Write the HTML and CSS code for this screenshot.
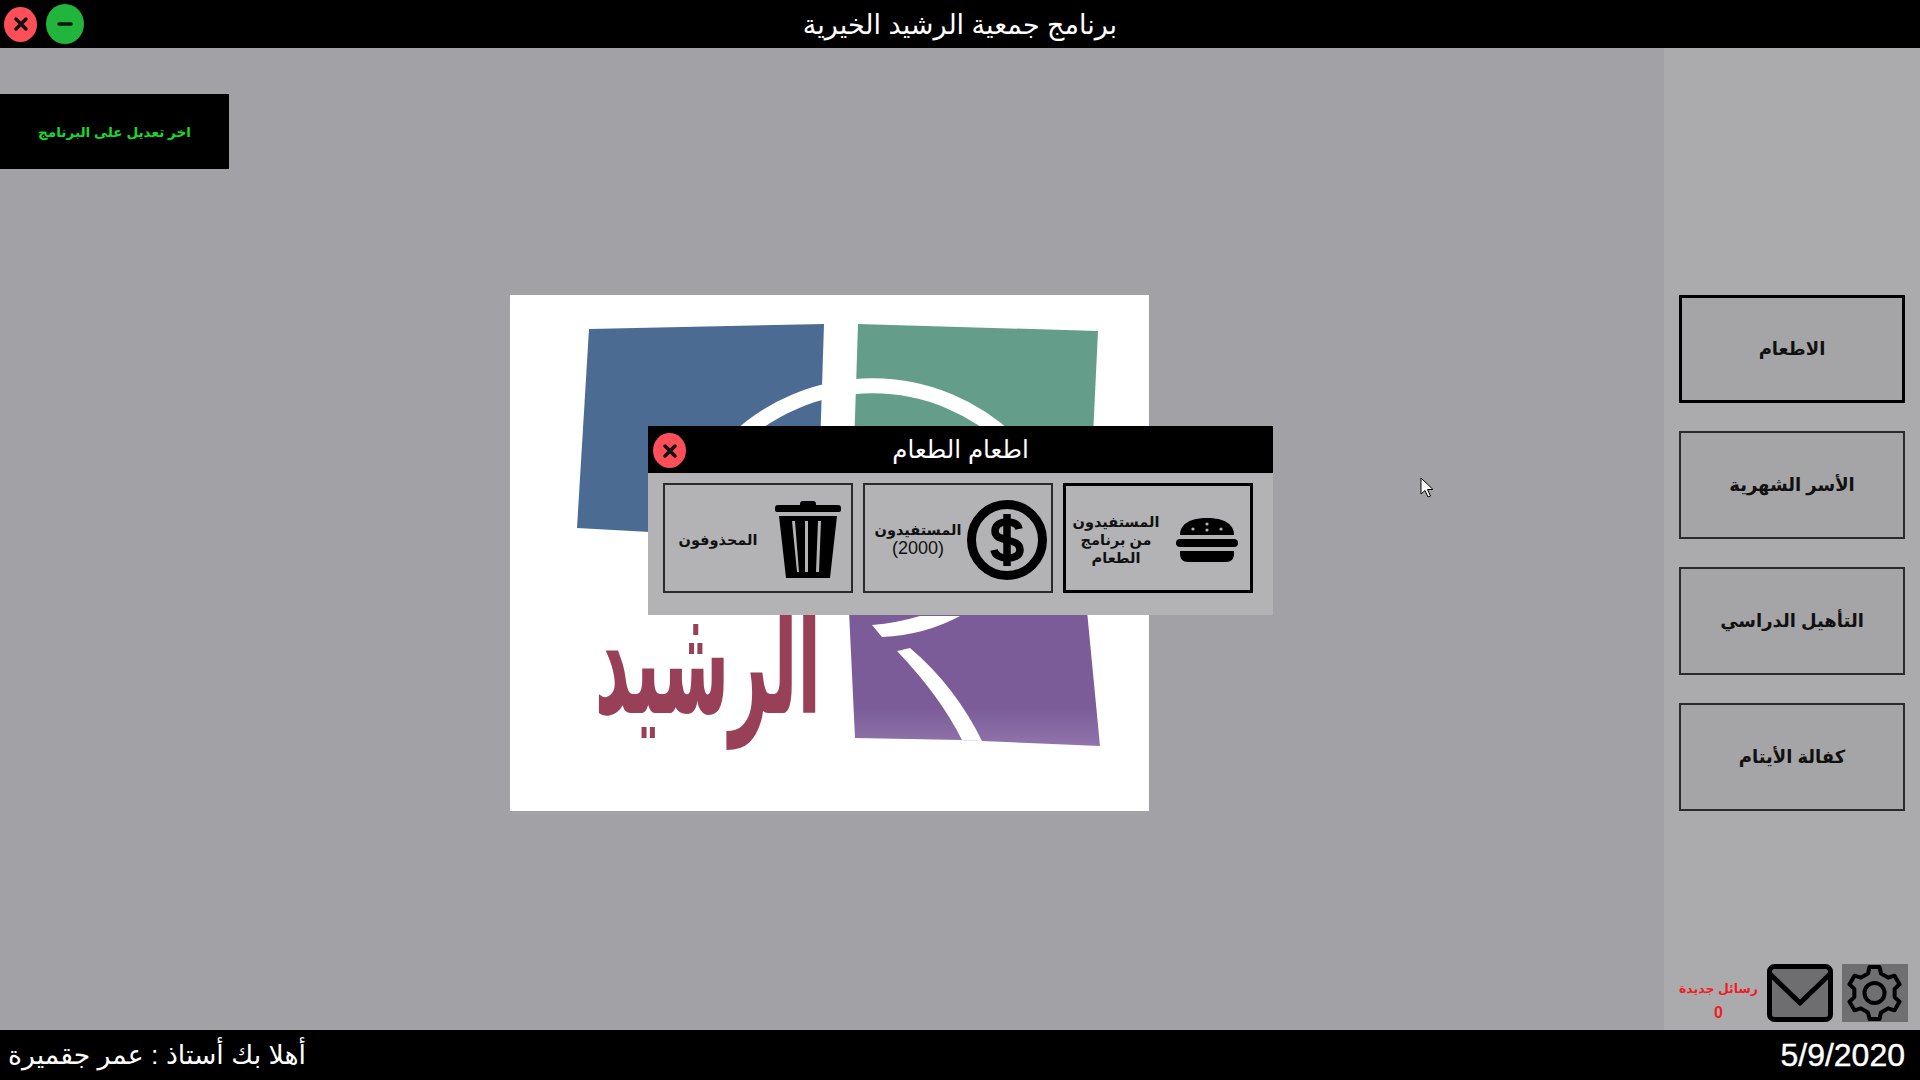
FILE: index.html
```
<!DOCTYPE html>
<html lang="ar">
<head>
    <meta charset="UTF-8">
    <link rel="stylesheet" href="styles.css">
    <title>برنامج جمعية الرشيد الخيرية</title>
</head>
<body>
<div class="app">
    <header class="top_bar">
        <div class="win_btns">
            <button class="round_btn btn_close">
                <svg viewBox="0 0 20 20" class="round_icon"><path d="M5 5L15 15M15 5L5 15"/></svg>
            </button>
            <button class="round_btn btn_min">
                <svg viewBox="0 0 20 20" class="round_icon"><path d="M4 10H16"/></svg>
            </button>
        </div>
        <h1 class="app_title">برنامج جمعية الرشيد الخيرية</h1>
    </header>

    <div class="main">
        <section class="content">
            <div class="last_edit">اخر تعديل على البرنامج</div>

            <svg class="logo" viewBox="510 294 639 516">
                <defs>
                    <linearGradient id="purple_fade" x1="0" y1="0" x2="0" y2="1">
                        <stop offset="0.72" stop-color="#7b5c98"/>
                        <stop offset="1" stop-color="#9174ab"/>
                    </linearGradient>
                </defs>
                <rect x="510" y="294" width="639" height="516" fill="#fff"/>
                <path d="M589 328L824 323L817 540L577 527Z" fill="#4b6b93"/>
                <path d="M858 323L1098 330L1088 540L851 540Z" fill="#659d8b"/>
                <path d="M849 610L1087 610L1100 745L982 740L962 739L855 737Z" fill="url(#purple_fade)"/>
                <path d="M735 440A199 199 0 0 1 1010 440" fill="none" stroke="#fff" stroke-width="15"/>
                <path d="M872 624L882 636Q925 634 960 615H920Q897 622 872 624Z" fill="#fff"/>
                <path d="M897 650L910 647Q955 685 982 740L962 739Q940 695 897 650Z" fill="#fff"/>
                <text class="logo_text" x="0" y="0" transform="translate(821 712) scale(.95 2.1)" direction="rtl" text-anchor="start">الرشيد</text>
            </svg>

            <div class="modal">
                <div class="modal_head">
                    <button class="round_btn modal_close">
                        <svg viewBox="0 0 20 20" class="round_icon"><path d="M5 5L15 15M15 5L5 15"/></svg>
                    </button>
                    <h2 class="modal_title">اطعام الطعام</h2>
                </div>
                <div class="modal_cards">
                    <a class="card card_on">
                        <svg class="card_icon burger" viewBox="0 0 62 44">
                            <path d="M4 17C4 6 14 0 31 0S58 6 58 17Z"/>
                            <rect x="0" y="21" width="62" height="8" rx="4"/>
                            <path d="M4 33H58V36C58 41 55 44 50 44H12C7 44 4 41 4 36Z"/>
                            <g fill="#b3b3b5"><circle cx="17" cy="11" r="1.6"/><circle cx="31" cy="6" r="1.6"/><circle cx="31" cy="12" r="1.6"/><circle cx="45" cy="11" r="1.6"/></g>
                        </svg>
                        <span class="card_text">المستفيدون<br>من برنامج<br>الطعام</span>
                    </a>
                    <a class="card">
                        <svg class="card_icon dollar" viewBox="0 0 80 80">
                            <circle cx="40" cy="40" r="35.5" fill="none" stroke="#000" stroke-width="9"/>
                            <path d="M52 29C51 24 46 22 40 22C33 22 28 25 28 31C28 37 33 38 40 40C47 42 53 43 53 50C53 56 47 58 40 58C33 58 28 55 27 50" fill="none" stroke="#000" stroke-width="7.5"/>
                            <path d="M40 14V66" stroke="#000" stroke-width="7.5"/>
                        </svg>
                        <span class="card_text">المستفيدون<br><span class="card_num">(2000)</span></span>
                    </a>
                    <a class="card card_del">
                        <svg class="card_icon trash" viewBox="0 0 66 77">
                            <path d="M25 3Q25 0 28 0H38Q41 0 41 3V4H63Q66 4 66 7V9Q66 11 63 11H3Q0 11 0 9V7Q0 4 3 4H25Z"/>
                            <path d="M4 15H62L55 77H11ZM20 20H17L22 71H24ZM33 20H30V71H33ZM46 20H43L41 71H44Z" fill-rule="evenodd"/>
                        </svg>
                        <span class="card_text">المحذوفون</span>
                    </a>
                </div>
            </div>

            <svg class="cursor" viewBox="0 0 14 22">
                <path d="M1 1V17L5 13.500L8 20L10.500 19L7.500 12.500H13Z" fill="#fff" stroke="#000" stroke-width="1"/>
            </svg>
        </section>

        <aside class="side">
            <div class="side_menu">
                <a class="side_btn side_btn_on">الاطعام</a>
                <a class="side_btn">الأسر الشهرية</a>
                <a class="side_btn">التأهيل الدراسي</a>
                <a class="side_btn">كفالة الأيتام</a>
            </div>
            <div class="side_tools">
                <div class="msg_count">رسائل جديدة<br><span class="msg_num">0</span></div>
                <svg class="tool_icon" viewBox="0 0 66 58">
                    <rect x="2.500" y="2.500" width="61" height="53" rx="5" fill="#6e6e70" stroke="#000" stroke-width="5"/>
                    <path d="M4 11L33 39L62 11" fill="none" stroke="#000" stroke-width="5" stroke-linecap="round" stroke-linejoin="round"/>
                </svg>
                <svg class="tool_icon" viewBox="0 0 66 58">
                    <rect width="66" height="58" fill="#6f6f71"/>
                    <path d="M26 9.500L27.500 3H37.500L39 9.500L46.140 13.620L52.520 11.670L57.520 20.330L52.640 24.880V33.120L57.520 37.670L52.520 46.330L46.140 44.380L39 48.500L37.500 55H27.500L26 48.500L18.860 44.380L12.480 46.330L7.480 37.670L12.360 33.120V24.880L7.480 20.330L12.480 11.670L18.860 13.620Z" fill="none" stroke="#000" stroke-width="4" stroke-linejoin="round"/>
                    <circle cx="32.500" cy="29" r="10" fill="none" stroke="#000" stroke-width="4"/>
                </svg>
            </div>
        </aside>
    </div>

    <footer class="bottom_bar">
        <span class="welcome">أهلا بك أستاذ : عمر جقميرة</span>
        <span class="date">5/9/2020</span>
    </footer>
</div>
</body>
</html>
```
FILE: styles.css
```
* {
    padding: 0;
    margin: 0;
    box-sizing: border-box;
}

body {
    font-family: "Liberation Sans", "DejaVu Sans", sans-serif;
    background: #a2a1a5;
}

.app {
    width: 1920px;
    height: 1080px;
    display: flex;
    flex-direction: column;
    overflow: hidden;
}

.top_bar {
    position: relative;
    height: 48px;
    padding-top: 2px;
    background: #000;
    display: flex;
    align-items: center;
    justify-content: center;
}

.win_btns {
    position: absolute;
    left: 4px;
    top: 4px;
    display: flex;
    align-items: center;
    gap: 9px;
}

.round_btn {
    border: 0;
    border-radius: 50%;
    display: flex;
    align-items: center;
    justify-content: center;
}

.btn_close {
    width: 33px;
    height: 35px;
    background: #fc4f58;
}

.btn_min {
    width: 38px;
    height: 40px;
    background: #22b53c;
}

.round_icon {
    width: 20px;
    height: 20px;
    fill: none;
    stroke: #111;
    stroke-width: 3.500;
    stroke-linecap: round;
}

.app_title {
    color: #fff;
    font-size: 27px;
    font-weight: normal;
}

.main {
    flex: 1;
    display: flex;
    min-height: 0;
}

.content {
    position: relative;
    flex: 1;
    padding-top: 46px;
    background: #a2a1a5;
}

.last_edit {
    width: 229px;
    height: 75px;
    background: #000;
    color: #18d92b;
    font-size: 13.600px;
    font-weight: bold;
    display: flex;
    align-items: center;
    justify-content: center;
}

.logo {
    display: block;
    width: 639px;
    height: 516px;
    margin: 126px 0 0 510px;
}

.logo_text {
    font-family: "DejaVu Sans", sans-serif;
    font-size: 72px;
    font-weight: bold;
    fill: #994059;
}

.modal {
    position: absolute;
    left: 648px;
    top: 378px;
    width: 625px;
    height: 189px;
    background: #b3b3b5;
}

.modal_head {
    position: relative;
    height: 47px;
    background: #000;
    display: flex;
    align-items: center;
    justify-content: center;
}

.modal_close {
    position: absolute;
    left: 5px;
    top: 7px;
    width: 33px;
    height: 35px;
    background: #fc4f58;
}

.modal_title {
    color: #fff;
    font-size: 24.500px;
    font-weight: normal;
}

.modal_cards {
    display: flex;
    flex-direction: row-reverse;
    gap: 10px;
    padding: 10px 20px 0 15px;
}

.card {
    width: 190px;
    height: 110px;
    border: 2px solid #2a2a2c;
    display: flex;
    align-items: center;
    justify-content: space-between;
    flex-direction: row-reverse;
    padding: 3px 10px 0 4px;
}

.card_on {
    border: 3px solid #000;
    padding-right: 12px;
}

.card_on .card_text {
    padding-right: 14px;
}

.card_del .card_text {
    padding-right: 8px;
}

.card_icon {
    flex: none;
}

.burger {
    width: 62px;
    height: 44px;
}

.dollar {
    width: 80px;
    height: 80px;
    margin-right: -6px;
}

.trash {
    width: 66px;
    height: 77px;
}

.card_text {
    flex: 1;
    text-align: center;
    font-size: 14.500px;
    font-weight: bold;
    line-height: 18px;
    color: #111;
}

.card_num {
    font-size: 18px;
    font-weight: normal;
}

.cursor {
    position: absolute;
    left: 1420px;
    top: 429px;
    width: 14px;
    height: 22px;
}

.side {
    width: 256px;
    background: #ababad;
    padding: 247px 15px 8px 15px;
    display: flex;
    flex-direction: column;
    justify-content: space-between;
}

.side_menu {
    display: flex;
    flex-direction: column;
    gap: 28px;
}

.side_btn {
    height: 108px;
    border: 2px solid #2a2a2c;
    background: #a5a5a7;
    color: #111;
    font-size: 18px;
    font-weight: bold;
    display: flex;
    align-items: center;
    justify-content: center;
}

.side_btn_on {
    border: 3px solid #000;
}

.side_tools {
    display: flex;
    align-items: center;
    justify-content: flex-end;
    gap: 9px;
    margin-right: -3px;
}

.msg_count {
    align-self: flex-end;
    color: #f01c24;
    font-size: 12.500px;
    font-weight: bold;
    text-align: center;
    line-height: 23px;
    white-space: nowrap;
    margin-bottom: -4px;
}

.msg_num {
    font-size: 16px;
}

.tool_icon {
    flex: none;
    width: 66px;
    height: 58px;
}

.bottom_bar {
    height: 50px;
    background: #000;
    color: #fff;
    display: flex;
    align-items: center;
    justify-content: space-between;
    padding: 0 15px 0 8px;
}

.welcome {
    font-size: 26.700px;
}

.date {
    font-size: 32px;
    -webkit-text-stroke: 0.4px #fff;
}
```
